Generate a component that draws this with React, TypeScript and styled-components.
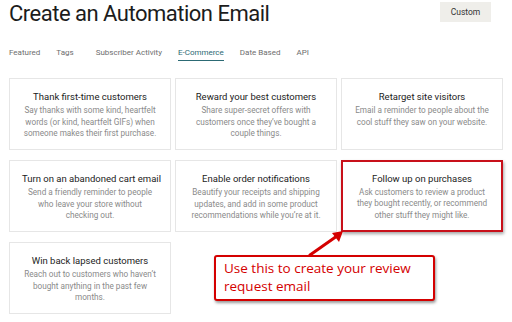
import styled, { createGlobalStyle } from "styled-components";

const GlobalStyle = createGlobalStyle`
  html, body {
    margin: 0;
    padding: 0;
    background: #ffffff;
  }
  body {
    font-family: Roboto, "Liberation Sans", sans-serif;
    color: #241c15;
  }
`;

type Card = { title: string; text: string; highlight?: boolean };

const cards: Card[] = [
  {
    title: "Thank first-time customers",
    text: "Say thanks with some kind, heartfelt words (or kind, heartfelt GIFs) when someone makes their first purchase.",
  },
  {
    title: "Reward your best customers",
    text: "Share super-secret offers with customers once they\u2019ve bought a couple things.",
  },
  {
    title: "Retarget site visitors",
    text: "Email a reminder to people about the cool stuff they saw on your website.",
  },
  {
    title: "Turn on an abandoned cart email",
    text: "Send a friendly reminder to people who leave your store without checking out.",
  },
  {
    title: "Enable order notifications",
    text: "Beautify your receipts and shipping updates, and add in some product recommendations while you\u2019re at it.",
  },
  {
    title: "Follow up on purchases",
    text: "Ask customers to review a product they bought recently, or recommend other stuff they might like.",
    highlight: true,
  },
  {
    title: "Win back lapsed customers",
    text: "Reach out to customers who haven\u2019t bought anything in the past few months.",
  },
];

const tabs = ["Featured", "Tags", "Subscriber Activity", "E-Commerce", "Date Based", "API"];

const App = () => {
  return (
    <>
      <GlobalStyle />
      <Page>
        <Header>
          <Title>Create an Automation Email</Title>
          <CustomButton>Custom</CustomButton>
        </Header>
        <Tabs>
          {tabs.map((t) => (
            <Tab key={t} $active={t === "E-Commerce"} $spaced={t === "Tags"}>
              {t}
            </Tab>
          ))}
        </Tabs>
        <Board>
          <Grid>
            {cards.map((c) => (
              <CardBox key={c.title} $highlight={c.highlight}>
                <CardTitle>{c.title}</CardTitle>
                <CardText>{c.text}</CardText>
              </CardBox>
            ))}
          </Grid>
          <Arrow width="40" height="30" viewBox="0 0 40 30">
            <line x1="3" y1="27" x2="30" y2="8" stroke="#d40000" strokeWidth="3" strokeLinecap="round" />
            <polygon points="36,3 25,5 32,14" fill="#d40000" />
          </Arrow>
          <Callout>Use this to create your review request email</Callout>
        </Board>
      </Page>
    </>
  );
};

export default App;

const Page = styled.div`
  padding: 0 11px 0 9px;
  width: 512px;
  box-sizing: border-box;
`;

const Header = styled.div`
  display: flex;
  justify-content: space-between;
  align-items: flex-start;
`;

const Title = styled.h1`
  margin: 0;
  font-size: 22px;
  line-height: 28px;
  font-weight: 400;
  color: #1c1c1c;
  letter-spacing: -0.5px;
`;

const CustomButton = styled.button`
  margin-top: 2px;
  margin-right: 10px;
  width: 51px;
  height: 20px;
  border: none;
  background: #efeeea;
  font-family: inherit;
  font-size: 8.5px;
  color: #333;
  padding: 0;
`;

const Tabs = styled.div`
  display: flex;
  gap: 16px;
  margin-top: 20px;
`;

const Tab = styled.div<{ $active?: boolean; $spaced?: boolean }>`
  font-size: 8px;
  line-height: 10px;
  color: ${(p) => (p.$active ? "#2c6a74" : "#6e6e6e")};
  padding-bottom: 2px;
  margin-right: ${(p) => (p.$spaced ? "6px" : "0")};
  border-bottom: 1.5px solid ${(p) => (p.$active ? "#2c6a74" : "transparent")};
`;

const Board = styled.div`
  position: relative;
  margin-top: 17px;
`;

const Grid = styled.div`
  display: grid;
  grid-template-columns: repeat(3, 162px);
  grid-auto-rows: 72px;
  column-gap: 4px;
  row-gap: 10px;
`;

const CardBox = styled.div<{ $highlight?: boolean }>`
  box-sizing: border-box;
  border: ${(p) => (p.$highlight ? "2.5px solid #c8101a" : "1px solid #e6e6e6")};
  box-shadow: ${(p) => (p.$highlight ? "1px 2px 3px rgba(0,0,0,0.35)" : "none")};
  padding: ${(p) => (p.$highlight ? "10.5px 8.5px 0" : "12px 12px 0")};
  text-align: center;
  background: #fff;
`;

const CardTitle = styled.div`
  font-size: 9.5px;
  line-height: 12px;
  color: #222;
  margin-bottom: 2px;
  white-space: nowrap;
`;

const CardText = styled.div`
  font-size: 8.2px;
  line-height: 11.5px;
  color: #8a8a8a;
`;

const Arrow = styled.svg`
  position: absolute;
  left: 298px;
  top: 150px;
`;

const Callout = styled.div`
  position: absolute;
  left: 205px;
  top: 177px;
  width: 221px;
  height: 46px;
  box-sizing: border-box;
  padding: 2px 8px;
  border: 2px solid #d40000;
  border-radius: 3px;
  background: #fff;
  box-shadow: 1px 2px 3px rgba(0,0,0,0.4);
  color: #d40000;
  font-family: "Open Sans", "Noto Sans", sans-serif;
  font-size: 13.5px;
  line-height: 18px;
`;
